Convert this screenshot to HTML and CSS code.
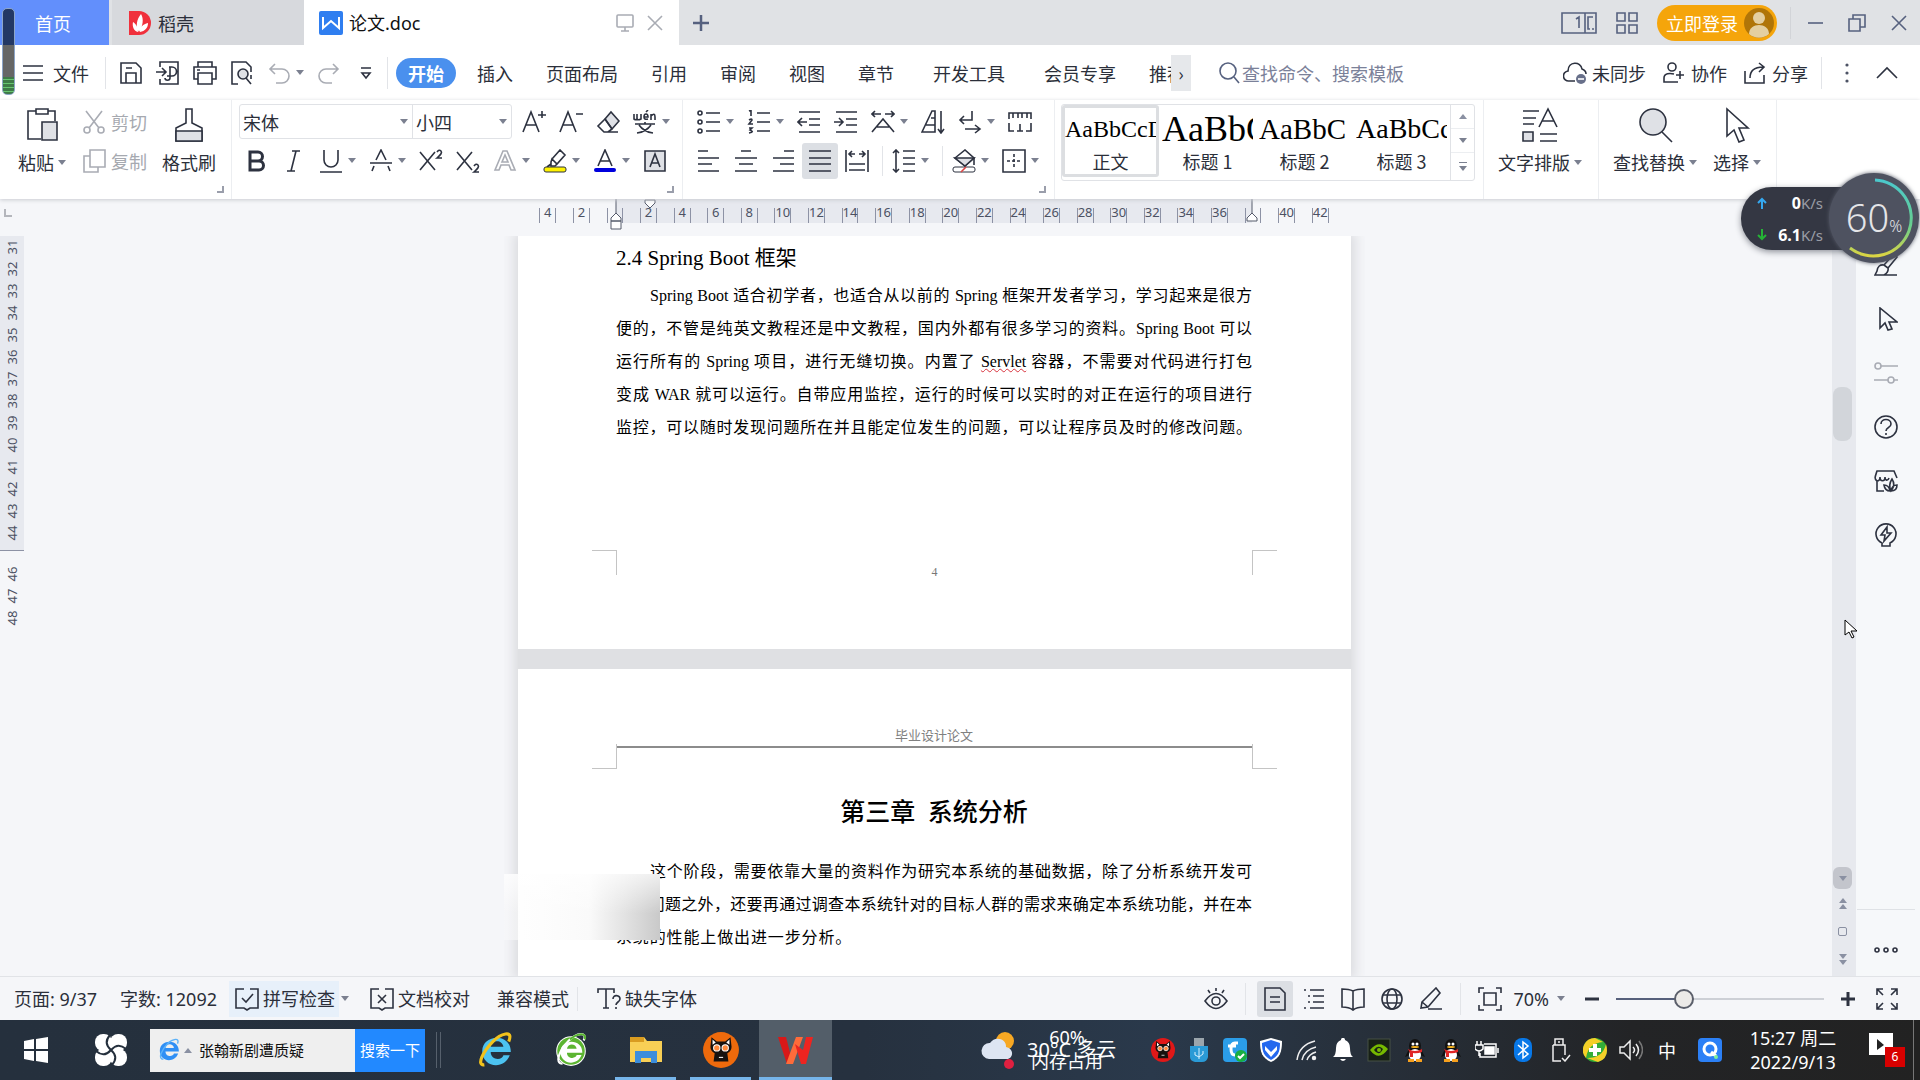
FILE: index.html
```html
<!DOCTYPE html>
<html lang="zh-CN">
<head>
    <meta charset="UTF-8">
    <meta name="viewport" content="width=device-width, initial-scale=1.0">
    <title>论文.doc</title>
    <link rel="stylesheet" href="styles.css">
</head>
<body>
    <!-- Window tabs -->
    <header class="titlebar">
        <button class="wtab home">首页</button>
        <button class="wtab docer">
            <svg width="24" height="24" viewBox="0 0 24 24"><path d="M0 0h10a12 12 0 0 1 0 24H0z" fill="#f0303c"/><path d="M10 21C6 15 8 8 12 3c3 5 2 12-2 18zM9 21c-4-1-6-5-5-10 3 2 5 5 5 10zM11 21c0-5 3-8 8-9 0 5-3 8-8 9z" fill="#fff"/></svg>
            稻壳
        </button>
        <div class="wtab current">
            <svg width="24" height="24" viewBox="0 0 24 24"><rect width="24" height="24" rx="2" fill="#2f7ef0"/><path d="M4 6v11l8-7 8 7V6" fill="none" stroke="#fff" stroke-width="2"/></svg>
            <span class="doc-name">论文.doc</span>
            <button class="plain" aria-label="窗口"><svg class="ico pale" viewBox="0 0 24 24"><rect x="4" y="4" width="16" height="12" rx="1"/><path d="M12 16v4M8 20h8"/></svg></button>
            <button class="plain" aria-label="关闭"><svg class="ico pale" viewBox="0 0 24 24"><path d="M5 5l14 14M19 5L5 19"/></svg></button>
        </div>
        <button class="plain new-tab" aria-label="新建"><svg class="ico slate" viewBox="0 0 24 24"><path d="M12 4v16M4 12h16" stroke-width="2.5"/></svg></button>
        <div class="window-tools">
            <button class="plain" aria-label="布局"><svg class="ico slate wide" viewBox="0 0 36 24"><path d="M1 2h34v20H1zM24 2v20M32 6h-5v12h2M31 18h2M15 8l3-2v11"/></svg></button>
            <button class="plain" aria-label="应用"><svg class="ico slate" viewBox="0 0 24 24"><path d="M2 2h8v8H2zM14 2h8v8h-8zM2 14h8v8H2zM14 14h8v8h-8z"/></svg></button>
            <button class="login">立即登录
                <svg width="30" height="30" viewBox="0 0 30 30"><circle cx="15" cy="15" r="15" fill="#b07508"/><circle cx="15" cy="10" r="6" fill="#e4cfa0"/><path d="M5 26c0-12 20-12 20 0-6 5-14 5-20 0z" fill="#e4cfa0"/></svg>
            </button>
            <span class="vline"></span>
            <button class="win" aria-label="最小化"><svg class="ico slate" viewBox="0 0 24 24"><path d="M5 12h15"/></svg></button>
            <button class="win" aria-label="还原"><svg class="ico slate" viewBox="0 0 24 24"><path d="M4 8h11v12H4zM8 8V4h12v12h-5"/></svg></button>
            <button class="win" aria-label="关闭"><svg class="ico slate" viewBox="0 0 24 24"><path d="M5 5l14 14M19 5L5 19"/></svg></button>
        </div>
    </header>

    <!-- Menu row -->
    <nav class="menubar">
        <button class="file">
            <svg class="ico" viewBox="0 0 24 24"><path d="M2 5h20M2 12h20M2 19h20"/></svg>文件
        </button>
        <span class="vline"></span>
        <div class="quick">
            <button class="plain" aria-label="保存"><svg class="ico" viewBox="0 0 24 24"><path d="M2 2h15l5 5v15H2zM7 22V12h10v10M7 7h6"/></svg></button>
            <button class="plain" aria-label="输出"><svg class="ico" viewBox="0 0 24 24"><path d="M4 6V1h18v22H4v-5M0 11h9M6 7l4 4-4 4M13 6h3a4 4 0 0 1 0 9h-5M14 6v11c0 3-5 3-5 0"/></svg></button>
            <button class="plain" aria-label="打印"><svg class="ico" viewBox="0 0 24 24"><path d="M5 6V1h14v5M5 18H1V6h22v12h-4M5 12h14v11H5zM4 9h3"/></svg></button>
            <button class="plain" aria-label="预览"><svg class="ico" viewBox="0 0 24 24"><path d="M8 23H2V1h14l5 5v5M21 14v4"/><circle cx="13" cy="13" r="5" fill="#dfe1e6"/><path d="M16 17l5 6"/></svg></button>
            <button class="plain" aria-label="撤销"><svg class="ico pale" viewBox="0 0 24 24"><path d="M8 3L3 8l5 5M3 8h12a7 7 0 0 1 0 14H9"/></svg><i class="caret"></i></button>
            <button class="plain" aria-label="重做"><svg class="ico pale" viewBox="0 0 24 24"><path d="M16 3l5 5-5 5M21 8H9a7 7 0 0 0 0 14h6"/></svg></button>
            <button class="plain" aria-label="更多"><svg class="ico" viewBox="0 0 24 24"><path d="M7 7h10M8 12l4 5 4-5z"/></svg></button>
        </div>
        <span class="vline"></span>
        <div class="menu-tabs">
            <button class="menu-tab active">开始</button>
            <button class="menu-tab">插入</button>
            <button class="menu-tab">页面布局</button>
            <button class="menu-tab">引用</button>
            <button class="menu-tab">审阅</button>
            <button class="menu-tab">视图</button>
            <button class="menu-tab">章节</button>
            <button class="menu-tab far">开发工具</button>
            <button class="menu-tab far">会员专享</button>
            <button class="menu-tab cut">推荐</button>
        </div>
        <button class="menu-more" aria-label="更多选项卡">›</button>
        <label class="command-search">
            <svg class="ico slate" viewBox="0 0 24 24"><circle cx="11" cy="10" r="8"/><path d="M17 16l5 6"/></svg>
            <input type="text" placeholder="查找命令、搜索模板" aria-label="查找命令">
        </label>
        <div class="share-tools">
            <button class="with-label"><svg class="ico" viewBox="0 0 24 24"><path d="M12 20H6a5 5 0 0 1-1-10C5 0 18 0 19 8c3 1 4 3 4 5"/><circle cx="18" cy="18" r="5" fill="#68708a" stroke="none"/><path d="M15 18h6" stroke="#fff"/></svg>未同步</button>
            <button class="with-label"><svg class="ico" viewBox="0 0 24 24"><circle cx="10" cy="6" r="4"/><path d="M16 21H2v-4c0-5 6-5 10-4M18 10v8M14 14h8"/></svg>协作</button>
            <button class="with-label"><svg class="ico" viewBox="0 0 24 24"><path d="M2 10v12h19v-8M7 17c0-8 5-11 13-11M16 2l5 4-5 5"/></svg>分享</button>
            <span class="vline"></span>
            <button class="plain" aria-label="更多"><svg class="ico solid" viewBox="0 0 24 24"><circle cx="12" cy="4" r="1.6"/><circle cx="12" cy="12" r="1.6"/><circle cx="12" cy="20" r="1.6"/></svg></button>
            <button class="plain" aria-label="收起"><svg class="ico" viewBox="0 0 24 24"><path d="M2 17L12 7l10 10"/></svg></button>
        </div>
    </nav>

    <!-- Ribbon -->
    <section class="ribbon">
        <div class="group clipboard">
            <button class="big"><svg class="ico large" viewBox="0 0 36 36"><path d="M12 4H4v28h13M24 4h7v10M12 2h12v5H12z"/><path d="M18 15h15v18H18z" fill="#dfe1e6"/></svg><span>粘贴<i class="caret"></i></span></button>
            <div class="stack">
                <button class="with-label"><svg class="ico pale" viewBox="0 0 24 24"><path d="M4 1l13 17M20 1L7 18"/><circle cx="5" cy="20" r="3"/><circle cx="19" cy="20" r="3"/></svg>剪切</button>
                <button class="with-label"><svg class="ico pale" viewBox="0 0 24 24"><path d="M8 1h15v17H8zM8 7H2v16h14v-5"/></svg>复制</button>
            </div>
            <button class="big"><svg class="ico large" viewBox="0 0 36 36"><path d="M15 2h6v14l10 5v13H5V21l10-5z"/><path d="M5 24h26v10H5z" fill="#dfe1e6"/></svg><span>格式刷</span></button>
            <i class="corner"></i>
        </div>

        <div class="group fonts">
            <div class="tools">
                <div class="font-box">
                    <label class="pick family"><select aria-label="字体"><option>宋体</option></select><i class="caret"></i></label>
                    <label class="pick size"><select aria-label="字号"><option>小四</option></select><i class="caret"></i></label>
                </div>
                <button class="plain" aria-label="增大字号"><svg class="ico" viewBox="0 0 24 24"><path d="M1 22L9 2l8 20M4 15h10M20 1v7M16 5h8"/></svg></button>
                <button class="plain" aria-label="减小字号"><svg class="ico" viewBox="0 0 24 24"><path d="M1 22L9 2l8 20M4 15h10M17 4h7"/></svg></button>
                <button class="plain" aria-label="清除格式"><svg class="ico" viewBox="0 0 24 24"><path d="M9 9l6-7 8 9-7 8z" fill="#dfe1e6"/><path d="M9 9l-7 7 6 6h4l4-3M9 9l7 10M8 22h14"/></svg></button>
                <button class="plain" aria-label="拼音指南"><svg class="ico" viewBox="0 0 24 24"><path d="M1 4v5q3 2 3-1V4M4 8q0 3 4 1V4M11 7h4q0-3-2-3t-2 3 4 2M13 2l2-2M18 10V4M18 6q4-4 4 1v3M2 14h20M12 12v2M6 15q5 7 14 8M18 15Q13 22 4 23" /></svg><i class="caret"></i></button>
            </div>
            <div class="tools row-two">
                <button class="plain" aria-label="加粗"><svg class="ico" viewBox="0 0 24 24"><path d="M5 3h8a4 4 0 0 1 0 9H5zM5 12h9a4 4 0 0 1 0 9H5z" stroke-width="3"/></svg></button>
                <button class="plain" aria-label="倾斜"><svg class="ico" viewBox="0 0 24 24"><path d="M10 2h8M5 22h8M14 2L9 22"/></svg></button>
                <button class="plain" aria-label="下划线"><svg class="ico" viewBox="0 0 24 24"><path d="M5 1v10a7 7 0 0 0 14 0V1M1 23h22"/></svg><i class="caret"></i></button>
                <button class="plain" aria-label="删除线"><svg class="ico" viewBox="0 0 24 24"><path d="M7 11l5-10 5 10M1 14h22M5 17l-2 5M19 17l2 5"/></svg><i class="caret"></i></button>
                <button class="plain" aria-label="上标"><svg class="ico" viewBox="0 0 24 24"><path d="M1 3l15 18M16 3L1 21M18 3q2-3 4-1t-4 7h5"/></svg></button>
                <button class="plain" aria-label="下标"><svg class="ico" viewBox="0 0 24 24"><path d="M1 3l15 18M16 3L1 21M18 17q2-3 4-1t-4 7h5"/></svg></button>
                <button class="plain" aria-label="文字效果"><svg class="ico pale" viewBox="0 0 24 24"><path d="M2 21L10 2h4l8 19h-4l-2-5H8l-2 5zM9 13h6l-3-7z"/></svg><i class="caret"></i></button>
                <button class="plain" aria-label="突出显示"><svg class="ico" viewBox="0 0 24 24"><path d="M9 10l8-9 5 5-8 9zM9 10l5 5-2 2H8v-4zM8 15l-4 3"/><rect x="1" y="18" width="22" height="5" rx="2" fill="#fff200" stroke-width="1"/></svg><i class="caret"></i></button>
                <button class="plain" aria-label="字体颜色"><svg class="ico" viewBox="0 0 24 24"><path d="M5 17L12 1l7 16M7 12h10"/><rect x="1" y="19" width="22" height="4" rx="2" fill="#00d" stroke="none"/></svg><i class="caret"></i></button>
                <button class="plain" aria-label="字符底纹"><svg class="ico" viewBox="0 0 24 24"><path d="M2 2h20v20H2z" fill="#dfe1e6"/><path d="M7 18l5-13 5 13M8 14h8"/></svg></button>
            </div>
            <i class="corner"></i>
        </div>

        <div class="group paragraph">
            <div class="tools">
                <button class="plain" aria-label="项目符号"><svg class="ico" viewBox="0 0 24 24"><circle cx="3" cy="3" r="2"/><circle cx="3" cy="12" r="2"/><circle cx="3" cy="21" r="2"/><path d="M9 3h14M9 12h14M9 21h14"/></svg><i class="caret"></i></button>
                <button class="plain" aria-label="编号"><svg class="ico" viewBox="0 0 24 24"><path d="M10 3h13M10 12h13M10 21h13M2 1l2-1v6M2 10q3-2 3 0l-3 4h4M2 18h3l-2 2q5 2-1 3"/></svg><i class="caret"></i></button>
                <button class="plain" aria-label="减少缩进"><svg class="ico" viewBox="0 0 24 24"><path d="M2 2h21M12 9h11M12 15h11M2 22h21M1 12h9M5 8l-4 4 4 4"/></svg></button>
                <button class="plain" aria-label="增加缩进"><svg class="ico" viewBox="0 0 24 24"><path d="M2 2h21M12 9h11M12 15h11M2 22h21M0 12h9M5 8l4 4-4 4"/></svg></button>
                <button class="plain" aria-label="中文版式"><svg class="ico" viewBox="0 0 24 24"><path d="M1 22L12 9l11 13M6 17h12M1 4h9M4 1L1 4l3 3M14 4h9M20 1l3 3-3 3"/></svg><i class="caret"></i></button>
                <button class="plain" aria-label="排序"><svg class="ico" viewBox="0 0 24 24"><path d="M1 22L11 1h3v21zM10 8h4M5 15h9M20 1v22M17 19l3 4 3-4"/></svg></button>
                <button class="plain" aria-label="换行"><svg class="ico" viewBox="0 0 24 24"><path d="M14 1v9H2M6 6l-4 4 4 4M7 19h14M17 15l5 4-5 4"/></svg><i class="caret"></i></button>
                <button class="plain" aria-label="标尺"><svg class="ico" viewBox="0 0 24 24"><path d="M1 9V3h22v6M5 3v5M10 3v5M14 3v5M19 3v5M1 13v8h5M23 13v8h-5M12 14v7M9 21h6"/></svg></button>
            </div>
            <div class="tools">
                <button class="plain" aria-label="左对齐"><svg class="ico" viewBox="0 0 24 24"><path d="M1 2h10M1 9h21M1 15h14M1 22h21"/></svg></button>
                <button class="plain" aria-label="居中"><svg class="ico" viewBox="0 0 24 24"><path d="M7 2h10M1 9h22M5 15h14M1 22h22"/></svg></button>
                <button class="plain" aria-label="右对齐"><svg class="ico" viewBox="0 0 24 24"><path d="M13 2h10M2 9h21M9 15h14M2 22h21"/></svg></button>
                <button class="plain on" aria-label="两端对齐"><svg class="ico" viewBox="0 0 24 24"><path d="M1 2h22M1 9h22M1 15h22M1 22h22"/></svg></button>
                <button class="plain" aria-label="分散对齐"><svg class="ico" viewBox="0 0 24 24"><path d="M1 1v22M23 1v22M4 15h16M4 21h16M4 5h6M14 5h6M7 2L4 5l3 3M17 2l3 3-3 3"/></svg></button>
                <span class="divider"></span>
                <button class="plain" aria-label="行距"><svg class="ico" viewBox="0 0 24 24"><path d="M4 1v22M1 4l3-3 3 3M1 20l3 3 3-3M11 2h12M11 9h12M11 15h12M11 22h12"/></svg><i class="caret"></i></button>
                <span class="divider"></span>
                <button class="plain" aria-label="底纹"><svg class="ico" viewBox="0 0 24 24"><path d="M3 9l10-8 9 8-9 8z"/><path d="M3 9h19l-9 8z" fill="#dfe1e6"/><path d="M22 9v7"/><rect x="1" y="18" width="22" height="5" rx="2" stroke-width="1"/><path d="M9 23l5-5" stroke="#d44"/></svg><i class="caret"></i></button>
                <button class="plain" aria-label="边框"><svg class="ico" viewBox="0 0 24 24"><path d="M1 1h22v22H1z"/><path d="M12 5v14M5 12h14" stroke-dasharray="3 2"/></svg><i class="caret"></i></button>
            </div>
            <i class="corner"></i>
        </div>

        <div class="group styles">
            <div class="style-box">
                <button class="style selected"><span class="sample s-body">AaBbCcD</span>正文</button>
                <button class="style"><span class="sample s-h1">AaBbC</span>标题 1</button>
                <button class="style"><span class="sample s-h2">AaBbC</span>标题 2</button>
                <button class="style"><span class="sample s-h3">AaBbCc</span>标题 3</button>
                <div class="style-scroll">
                    <button aria-label="上一行"><i class="caret up"></i></button>
                    <button aria-label="下一行"><i class="caret"></i></button>
                    <button class="expand" aria-label="展开"><i class="caret"></i></button>
                </div>
            </div>
        </div>

        <div class="group layout">
            <button class="big"><svg class="ico large" viewBox="0 0 36 36"><path d="M1 4h16M1 11h13M1 17h11M17 20L26 2l9 18M20 14h12M18 27h17M18 34h17"/><path d="M1 25h10v9H1z" fill="#dfe1e6"/></svg><span>文字排版<i class="caret"></i></span></button>
        </div>
        <div class="group find">
            <button class="big"><svg class="ico large" viewBox="0 0 36 36"><circle cx="16" cy="15" r="13" fill="#dfe1e6"/><path d="M25 25l10 10"/></svg><span>查找替换<i class="caret"></i></span></button>
            <button class="big"><svg class="ico large" viewBox="0 0 36 36"><path d="M8 2v27l7-6 5 12 5-2-5-12h9z"/></svg><span>选择<i class="caret"></i></span></button>
        </div>
    </section>

    <!-- Document area -->
    <main class="workspace">
        <aside class="v-ruler">
            <div class="tab-stop"><i></i></div>
            <div class="v-band"><span>31</span><span>32</span><span>33</span><span>34</span><span>35</span><span>36</span><span>37</span><span>38</span><span>39</span><span>40</span><span>41</span><span>42</span><span>43</span><span>44</span></div>
            <div class="v-rest"><span>46</span><span>47</span><span>48</span></div>
        </aside>

        <div class="canvas">
            <div class="h-ruler">
                <div class="h-band"></div>
                <div class="h-cells">
                    <span>4</span><span>2</span><span></span><span>2</span><span>4</span><span>6</span><span>8</span><span>10</span><span>12</span><span>14</span><span>16</span><span>18</span><span>20</span><span>22</span><span>24</span><span>26</span><span>28</span><span>30</span><span>32</span><span>34</span><span>36</span><span></span><span>40</span><span>42</span>
                </div>
                <svg class="marker first" width="14" height="10" viewBox="0 0 14 10"><path d="M2 1h10v3L7 9 2 4z"/></svg>
                <svg class="marker left" width="14" height="32" viewBox="0 0 14 32"><path d="M7 0v14M2 22v-3l5-5 5 5v3zM2 22h10v8H2z"/></svg>
                <svg class="marker right" width="14" height="32" viewBox="0 0 14 32"><path d="M7 0v14M2 22v-3l5-5 5 5v3z"/></svg>
            </div>

            <div class="pages">
                <article class="page">
                    <h2>2.4 Spring Boot 框架</h2>
                    <p>
                        <span class="line indent">Spring Boot 适合初学者，也适合从以前的 Spring 框架开发者学习，学习起来是很方</span>
                        <span class="line">便的，不管是纯英文教程还是中文教程，国内外都有很多学习的资料。Spring Boot 可以</span>
                        <span class="line">运行所有的 Spring 项目，进行无缝切换。内置了 <u>Servlet</u> 容器，不需要对代码进行打包</span>
                        <span class="line">变成 WAR 就可以运行。自带应用监控，运行的时候可以实时的对正在运行的项目进行</span>
                        <span class="line">监控，可以随时发现问题所在并且能定位发生的问题，可以让程序员及时的修改问题。</span>
                    </p>
                    <footer class="page-foot"><i class="mark bl"></i><span>4</span><i class="mark br"></i></footer>
                </article>
                <article class="page second">
                    <div class="page-head">毕业设计论文</div>
                    <div class="marks"><i class="mark tl"></i><i class="mark tr"></i></div>
                    <h1>第三章&ensp;系统分析</h1>
                    <p>
                        <span class="line indent">这个阶段，需要依靠大量的资料作为研究本系统的基础数据，除了分析系统开发可</span>
                        <span class="line">行性问题之外，还要再通过调查本系统针对的目标人群的需求来确定本系统功能，并在本</span>
                        <span class="line short">系统的性能上做出进一步分析。</span>
                    </p>
                    <div class="smear"></div>
                </article>
            </div>
        </div>

        <div class="scrollbar">
            <div class="track"><div class="thumb"></div></div>
            <button class="down" aria-label="向下"><i class="caret"></i></button>
            <button aria-label="上一页"><i class="caret up"></i><i class="caret up"></i></button>
            <button aria-label="选择浏览对象"><i class="square"></i></button>
            <button aria-label="下一页"><i class="caret"></i><i class="caret"></i></button>
        </div>

        <aside class="sidebar">
            <button class="plain" aria-label="样式"><svg class="ico" viewBox="0 0 24 24"><path d="M10 12L19 2q3-1 4 2l-9 11M10 12q-6-1-7 6l-2 4h9q5-3 4-7zM10 22h13"/></svg></button>
            <button class="plain" aria-label="选择"><svg class="ico" viewBox="0 0 24 24"><path d="M6 1v20l5-5 3 7 4-1-3-7h8z"/></svg></button>
            <button class="plain" aria-label="属性"><svg class="ico pale" viewBox="0 0 24 24"><circle cx="4" cy="5" r="3"/><path d="M7 5h17M0 19h14M20 19h4"/><circle cx="17" cy="19" r="3"/></svg></button>
            <button class="plain" aria-label="帮助"><svg class="ico" viewBox="0 0 24 24"><circle cx="12" cy="12" r="11"/><path d="M7 9c0-6 10-6 10 0 0 4-5 3-5 7M12 18v2"/></svg></button>
            <button class="plain" aria-label="素材"><svg class="ico" viewBox="0 0 24 24"><path d="M3 12v10h7M3 12C0 10 1 8 3 2h17l3 7M3 12c3 0 3-2 3-4 0 5 5 5 5 0 0 4 3 4 4 1M17 22q-3-6 1-12 4 6-1 12zM16 22q-5 0-6-6 5 0 6 6zM17 22q1-6 6-6 0 6-6 6z"/></svg></button>
            <button class="plain" aria-label="灵感"><svg class="ico" viewBox="0 0 24 24"><path d="M8 20a10 10 0 1 1 8 0v3H8zM13 4l-6 8h4l-1 6 7-8h-4z"/></svg></button>
            <button class="plain side-more" aria-label="更多"><svg class="ico" viewBox="0 0 24 24"><circle cx="3" cy="12" r="2"/><circle cx="12" cy="12" r="2"/><circle cx="21" cy="12" r="2"/></svg></button>
        </aside>
    </main>

    <!-- Status bar -->
    <footer class="statusbar">
        <span class="stat">页面: 9/37</span>
        <span class="stat">字数: 12092</span>
        <button class="with-label spell"><svg class="ico" viewBox="0 0 24 24"><path d="M9 2H1v19h8l3 2 3-2h8V2h-8M7 11l4 4 7-8"/></svg>拼写检查</button>
        <i class="caret"></i>
        <button class="with-label proof"><svg class="ico" viewBox="0 0 24 24"><path d="M9 2H1v19h8l3 2 3-2h8V2h-8M8 8l8 8M16 8l-8 8"/></svg>文档校对</button>
        <span class="compat">兼容模式</span>
        <button class="with-label missing"><svg class="ico" viewBox="0 0 24 24"><path d="M1 6V2h16v4M9 2v19M6 21h6M16 12c0-5 7-4 7 0 0 3-4 3-4 6M19 20v2"/></svg>缺失字体</button>

        <div class="view-tools">
            <button class="plain" aria-label="护眼"><svg class="ico" viewBox="0 0 24 24"><path d="M1 14q11-15 22 0-11 15-22 0zM12 1v3M4 3l2 3M20 3l-2 3"/><circle cx="12" cy="14" r="4"/></svg></button>
            <span class="vline"></span>
            <button class="plain on" aria-label="页面视图"><svg class="ico" viewBox="0 0 24 24"><path d="M2 1h15l5 5v17H2zM7 10h10M7 15h10"/></svg></button>
            <button class="plain" aria-label="大纲"><svg class="ico" viewBox="0 0 24 24"><path d="M2 3h2M8 3h14M6 9h2M11 9h11M6 15h2M11 15h11M2 21h2M8 21h14"/></svg></button>
            <button class="plain" aria-label="阅读"><svg class="ico" viewBox="0 0 24 24"><path d="M12 4q-4-2-11-2v18q7 0 11 3 4-3 11-3V2q-7 0-11 2v19"/></svg></button>
            <button class="plain" aria-label="网页"><svg class="ico" viewBox="0 0 24 24"><circle cx="12" cy="12" r="10"/><ellipse cx="12" cy="12" rx="5" ry="10"/><path d="M3 8h18M3 16h18"/></svg></button>
            <button class="plain" aria-label="写作"><svg class="ico" viewBox="0 0 24 24"><path d="M3 15L17 1l4 5L9 20l-7 1zM3 15l6 5M9 22h14"/></svg></button>
            <span class="vline"></span>
            <button class="plain" aria-label="适应"><svg class="ico" viewBox="0 0 24 24"><path d="M6 6h12v12H6zM1 6V1h5M18 1h5v5M1 18v5h5M18 23h5v-5"/></svg></button>
            <button class="zoom-value">70%<i class="caret"></i></button>
            <button class="plain" aria-label="缩小"><svg class="ico" viewBox="0 0 24 24"><path d="M5 12h14" stroke-width="3"/></svg></button>
            <input class="zoom-range" type="range" min="0" max="100" value="31" aria-label="缩放">
            <button class="plain" aria-label="放大"><svg class="ico" viewBox="0 0 24 24"><path d="M5 12h14M12 5v14" stroke-width="3"/></svg></button>
            <button class="plain" aria-label="全屏"><svg class="ico" viewBox="0 0 24 24"><path d="M2 8V2h6M2 2l6 6M22 8V2h-6M22 2l-6 6M2 16v6h6M2 22l6-6M22 16v6h-6M22 22l-6-6"/></svg></button>
        </div>
    </footer>

    <!-- Desktop taskbar -->
    <div class="taskbar">
        <button class="start" aria-label="开始"><svg width="24" height="26" viewBox="0 0 24 26"><path d="M0 4l10-2v10H0zM12 2l12-2v12H12zM0 14h10v10L0 22zM12 14h12v12l-12-2z" fill="#fff"/></svg></button>
        <button class="fan" aria-label="小组件"><svg width="34" height="34" viewBox="0 0 34 34"><g fill="#fff"><rect x="1" y="1" width="17" height="17" rx="8"/><rect x="16" y="1" width="17" height="17" rx="8"/><rect x="16" y="16" width="17" height="17" rx="8"/><rect x="1" y="16" width="17" height="17" rx="8"/><path d="M10 10h14v14H10z"/></g><g fill="none" stroke="#25303d" stroke-width="2"><path id="blade" d="M16 2q-7 8 1 15"/><use href="#blade" transform="rotate(90 17 17)"/><use href="#blade" transform="rotate(180 17 17)"/><use href="#blade" transform="rotate(270 17 17)"/></g></svg></button>
        <form class="task-search">
            <svg width="24" height="30" viewBox="0 0 34 34"><use href="#letter-e" fill="#2f8ff5"/><path d="M29 8c4-9-7-7-14 0C6 17 1 30 9 30" fill="none" stroke="#5db2f8" stroke-width="2"/></svg>
            <i class="caret up"></i>
            <input type="text" value="张翰新剧遭质疑" aria-label="搜索">
            <button type="button">搜索一下</button>
        </form>
        <span class="grip"></span>
        <div class="apps">
            <button class="app" aria-label="浏览器"><svg width="36" height="36" viewBox="0 0 34 34"><defs><path id="letter-e" fill-rule="evenodd" d="M31 19H12c0 8 11 8 12 3h6C25 36 4 34 4 18 4 2 31 0 31 19zM12 14h12c-1-7-11-7-12 0z"/></defs><use href="#letter-e" fill="#4cc3f1"/><path d="M29 9c5-12-8-7-15 0C5 18-2 32 6 31" fill="none" stroke="#f2c21c" stroke-width="3"/></svg></button>
            <button class="app" aria-label="安全浏览器"><svg width="36" height="36" viewBox="0 0 34 34"><circle cx="17" cy="18" r="14" fill="#fff"/><circle cx="17" cy="18" r="13" fill="#5cb531"/><svg x="4" y="5" width="26" height="26" viewBox="0 0 34 34"><use href="#letter-e" fill="#fff"/></svg><path d="M29 8c4-9-7-7-14 0C6 17 1 30 9 30" fill="none" stroke="#fff" stroke-width="2"/><path d="M30 7c2-7-7-6-14 0" fill="none" stroke="#58b530" stroke-width="2"/></svg></button>
            <button class="app open" aria-label="文件资源管理器"><svg width="36" height="36" viewBox="0 0 36 36"><path d="M2 5h14l3 4h15v21H2z" fill="#f8cf55"/><path d="M2 5h14v5H2z" fill="#d99c20"/><path d="M7 31V19h22v12h-6v-5H13v5z" fill="#3c8ddc"/></svg></button>
            <button class="app open" aria-label="抢票"><svg width="38" height="38" viewBox="0 0 36 36"><circle cx="18" cy="18" r="17" fill="#ee6a0c"/><use href="#cat"/></svg></button>
            <button class="app open active" aria-label="WPS"><svg width="36" height="32" viewBox="0 0 36 32"><path d="M0 3h8l7 27H9z" fill="#d81818"/><path d="M8 30L18 3h7L15 30z" fill="#ff6b3a"/><path d="M17 10l6 20h5L35 3h-7l-3 13z" fill="#ee2420"/></svg></button>
        </div>

        <div class="weather">
            <svg width="36" height="40" viewBox="0 0 36 40"><circle cx="24" cy="11" r="9" fill="#f7a823"/><path d="M8 29a8 8 0 0 1 1-16c5-8 17-4 16 4 9 2 7 12 1 12z" fill="#dde5f2"/><circle cx="28" cy="34" r="5" fill="#e02040"/></svg>
            <div class="weather-text"><span class="temp">30°C 多云</span><span class="memory">60%<br>内存占用</span></div>
        </div>
        <div class="tray">
            <svg viewBox="0 0 24 24"><defs><g id="cat"><path d="M9 6l5 4h8l5-4 1 9q0 4-4 6l1 8H11l1-8q-4-2-4-6z" fill="#17120f"/><path d="M10 8l3 3-3 2zM26 8l-3 3 3 2z" fill="#fff"/><circle cx="14" cy="16" r="3" fill="#ff8a3c" stroke="#fff"/><circle cx="22" cy="16" r="3" fill="#ff8a3c" stroke="#fff"/><path d="M16 25h4" stroke="#fff"/></g><g id="penguin"><ellipse cx="12" cy="8" rx="6" ry="7" fill="#111"/><path d="M6 11l-4 8 5-2v5h10v-5l5 2-4-8z" fill="#111"/><ellipse cx="12" cy="17" rx="6" ry="6" fill="#fff"/><circle cx="10" cy="6" r="1.5" fill="#fff"/><circle cx="14" cy="6" r="1.5" fill="#fff"/><ellipse cx="12" cy="9" rx="4" ry="1" fill="#f7b21d"/><path d="M5 11q7 4 14 0v3q-5 2-9 1v4H7v-4z" fill="#e02626"/><path d="M5 21h6v3H5zM13 21h6v3h-6z" fill="#f7a01d"/></g></defs><circle cx="12" cy="12" r="12" fill="#e01818"/><svg width="24" height="24" viewBox="2 2 32 32"><use href="#cat"/></svg></svg>
            <svg viewBox="0 0 24 24"><path d="M7 0h10v8H7z" fill="#9ba5ac"/><path d="M3 8h18v11q-1 5-6 5H8q-5-1-5-5z" fill="#2a9ad6"/><path d="M12 10v11M8 14v3l4 2 4-3v-3" stroke="#d8f1ff" fill="none"/></svg>
            <svg viewBox="0 0 24 24"><rect width="24" height="24" rx="4" fill="#2b9de8"/><path d="M15 5h-3q-4 0-4 6t4 6M5 8h8" fill="none" stroke="#fff" stroke-width="3"/><circle cx="18" cy="18" r="6" fill="#18ae42"/><path d="M15 18l2 2 4-4" stroke="#fff" stroke-width="2" fill="none"/></svg>
            <svg viewBox="0 0 24 24"><path d="M12 0l11 3c0 11-2 17-11 21C3 20 1 14 1 3z" fill="#fff"/><path d="M12 2l9 3c0 9-2 13-9 17C5 18 3 14 3 5z" fill="#2468ee"/><path d="M6 8l6 6 6-6v4l-6 7-6-7z" fill="#fff"/></svg>
            <svg viewBox="0 0 24 24" fill="none" stroke="#eee" stroke-width="1.5"><path d="M2 22Q4 7 20 3M7 22Q9 12 21 9M12 22q2-6 9-8"/><circle cx="19" cy="20" r="1.5" fill="#fff"/></svg>
            <svg viewBox="0 0 24 24" fill="#fff"><path d="M2 19q3-2 3-9 0-6 5-8c0-3 4-3 4 0q5 2 5 8 0 7 3 9zM9 21h6q-3 4-6 0z"/></svg>
            <svg viewBox="0 0 24 24"><rect x="1" y="1" width="22" height="22" fill="#172016" stroke="#465044"/><path d="M3 12q9-11 18-1-9 13-18 1zM7 12q5 7 9-1-5-5-9 1" fill="#76b900" fill-rule="evenodd"/><circle cx="12" cy="12" r="2" fill="#76b900"/></svg>
            <svg viewBox="0 0 24 24"><use href="#penguin"/></svg>
            <svg viewBox="0 0 24 24"><use href="#penguin"/></svg>
            <svg viewBox="0 0 24 24" fill="none" stroke="#fff" stroke-width="1.5"><path d="M9 6h12v13H5v-4M23 10v5M2 3v4M6 3v4M0 7h8v4q-4 4-8 0zM4 13v5"/><path d="M10 9h9v7h-9z" fill="#fff"/></svg>
            <svg viewBox="0 0 24 24"><rect x="3" width="18" height="24" rx="8" fill="#0878e8"/><path d="M7 7l10 9-5 4V4l5 4-10 9" fill="none" stroke="#fff" stroke-width="1.5"/></svg>
            <svg viewBox="0 0 24 24" fill="none" stroke="#eee" stroke-width="1.5"><path d="M8 7V1h8v6M6 7h12v10M6 7v16h8M11 4h2M15 20l3 3 5-6"/></svg>
            <svg viewBox="0 0 24 24"><circle cx="12" cy="12" r="12" fill="#33ad38"/><path d="M3 20A12 12 0 0 1 12 0l8 4Q5 5 3 20zM4 20q16 0 19-14 4 14-8 18z" fill="#f5cf28"/><path d="M12 6v12M6 12h12" stroke="#fff" stroke-width="4"/></svg>
            <svg viewBox="0 0 24 24" fill="none" stroke="#eee" stroke-width="1.5"><path d="M1 9h4l6-6v18l-6-6H1zM14 9q3 3 0 6M17 6q5 6 0 12"/><path d="M20 3q7 9 0 18" stroke="#777"/></svg>
            <span class="ime">中</span>
        </div>
        <svg width="24" height="24" viewBox="0 0 24 24"><rect width="24" height="24" rx="4" fill="#2c80f6"/><circle cx="12" cy="11" r="6" fill="none" stroke="#fff" stroke-width="3"/><path d="M13 14l5 4" stroke="#fff" stroke-width="3"/><circle cx="18" cy="19" r="2" fill="#7df09a"/></svg>
        <div class="clock">15:27 周二<br>2022/9/13</div>
        <div class="notice"><svg width="24" height="24" viewBox="0 0 24 24"><path d="M0 0h24v22H0z" fill="#fff"/><path d="M8 6l7 6-7 5z" fill="#222"/></svg><b>6</b></div>
        <span class="desktop-edge"></span>
    </div>

    <!-- Floating overlays -->
    <div class="battery"></div>
    <div class="netmeter">
        <div class="speeds">
            <div><svg width="10" height="12" viewBox="0 0 10 12"><path d="M5 12V2M1 6l4-4 4 4" stroke="#35a8f0" stroke-width="2" fill="none"/></svg><span><b>0</b>K/s</span></div>
            <div><svg width="10" height="12" viewBox="0 0 10 12"><path d="M5 0v10M1 6l4 4 4-4" stroke="#25b336" stroke-width="2" fill="none"/></svg><span><b>6.1</b>K/s</span></div>
        </div>
        <div class="dial">
            <svg width="90" height="90" viewBox="0 0 90 90"><defs><linearGradient id="arc" x1="0" y1="0" x2="0" y2="1"><stop offset="0" stop-color="#4bc8cc"/><stop offset="0.6" stop-color="#68cf8e"/><stop offset="1" stop-color="#dbd443"/></linearGradient></defs><path d="M46 7a38 38 0 1 1-25 68" fill="none" stroke="url(#arc)" stroke-width="3"/></svg>
            <span class="percent">60<small>%</small></span>
        </div>
    </div>
    <svg class="pointer" width="14" height="20" viewBox="0 0 14 20"><path d="M1 1v15l4-3 3 6 2-1-3-6h6z" fill="#fff" stroke="#000"/></svg>
</body>
</html>
```

FILE: styles.css
```css
* {
    box-sizing: border-box;
}
body {
    margin: 0;
    height: 100vh;
    position: relative;
    display: flex;
    flex-direction: column;
    overflow: hidden;
    font-family: "Noto Sans CJK SC", sans-serif;
    font-size: 18px;
    line-height: 24px;
    color: #2b2f3a;
    background-color: #f5f6f9;
}
button, input, select {
    font: inherit;
    color: inherit;
    border: 0;
    padding: 0;
    margin: 0;
    background: none;
}
button {
    white-space: nowrap;
}
svg {
    display: block;
    flex: none;
}
.ico {
    width: 24px;
    height: 24px;
    fill: none;
    stroke: #2d3240;
    stroke-width: 1.6;
}
.ico.pale {
    stroke: #a9acb4;
}
.ico.slate {
    stroke: #56617f;
}
.ico.solid {
    fill: #4d5365;
    stroke: none;
}
.ico.wide {
    width: 36px;
}
.ico.large {
    width: 36px;
    height: 36px;
}
.plain {
    display: flex;
    align-items: center;
    gap: 5px;
}
.with-label {
    display: flex;
    align-items: center;
    gap: 5px;
}
.caret {
    display: inline-block;
    flex: none;
    border: 4px solid transparent;
    border-top: 5px solid #7b8090;
    border-bottom: 0;
}
.caret.up {
    border-top: 0;
    border-bottom: 5px solid #8a90a2;
}
.vline {
    width: 1px;
    height: 32px;
    background-color: #e2e4e8;
}

/* title bar */
.titlebar {
    display: flex;
    height: 45px;
    flex: none;
    background-color: #e0e2e5;
}
.wtab {
    display: flex;
    align-items: center;
    gap: 5px;
}
.wtab.home {
    width: 109px;
    padding-left: 35px;
    color: #fff;
    background-color: #628ffc;
}
.wtab.docer {
    width: 192px;
    margin-left: 3px;
    padding-left: 17px;
    background-color: #d7d9dd;
}
.wtab.current {
    width: 375px;
    padding: 0 12px 0 15px;
    gap: 6px;
    color: #111;
    background-color: #fff;
}
.doc-name {
    flex: 1;
    font-family: "Noto Sans", "Noto Sans CJK SC", sans-serif;
}
.new-tab {
    margin-left: 10px;
}
.window-tools {
    display: flex;
    align-items: center;
    margin-left: auto;
}
.window-tools .plain {
    margin-right: 18px;
}
.login {
    display: flex;
    align-items: center;
    justify-content: space-between;
    width: 120px;
    height: 36px;
    margin-right: 13px;
    padding: 0 3px 0 9px;
    border-radius: 18px;
    color: #fff;
    background-color: #f5a50b;
}
.window-tools .vline {
    margin-right: 3px;
    background-color: #d2d4d8;
}
.win {
    display: flex;
    justify-content: center;
    width: 42px;
}

/* menu row */
.menubar {
    display: flex;
    align-items: center;
    height: 55px;
    flex: none;
    background-color: #fff;
}
.file {
    display: flex;
    align-items: center;
    gap: 8px;
    padding: 0 16px 0 21px;
}
.quick {
    display: flex;
    gap: 13px;
    padding: 0 9px 0 13px;
}
.menu-tabs {
    display: flex;
    align-items: center;
    gap: 33px;
    padding-left: 8px;
}
.menu-tab.active {
    width: 60px;
    height: 30px;
    margin-right: -12px;
    border-radius: 15px;
    font-weight: bold;
    color: #fff;
    background-color: #4a90ee;
}
.menu-tab.far {
    margin-left: 6px;
}
.menu-tab.cut {
    width: 22px;
    overflow: hidden;
}
.menu-more {
    width: 20px;
    height: 36px;
    background-color: #e6e8eb;
}
.command-search {
    display: flex;
    align-items: center;
    gap: 1px;
    margin-left: 26px;
}
.command-search input {
    width: 220px;
    height: 30px;
}
.command-search input::placeholder {
    color: #7b8199;
    opacity: 1;
}
.share-tools {
    display: flex;
    align-items: center;
    gap: 16px;
    margin-left: auto;
    padding-right: 21px;
}
.share-tools .vline {
    margin: 0 -3px;
}

/* ribbon */
.ribbon {
    display: flex;
    height: 99px;
    flex: none;
    background-color: #fff;
    box-shadow: 0 1px 4px #c9cbd1;
    position: relative;
    z-index: 1;
}
.group {
    position: relative;
    padding-top: 4px;
    border-right: 1px solid #eceef1;
}
.corner {
    position: absolute;
    right: 8px;
    bottom: 6px;
    width: 7px;
    height: 7px;
    border-right: 2px solid #9a9eab;
    border-bottom: 2px solid #9a9eab;
}
.clipboard {
    display: flex;
    align-items: flex-start;
    width: 232px;
    padding-left: 18px;
}
.clipboard .corner {
    right: 7px;
}
.big {
    display: flex;
    flex-direction: column;
    align-items: center;
    gap: 7px;
    padding-top: 3px;
}
.big span {
    display: flex;
    align-items: center;
    gap: 4px;
}
.stack {
    display: grid;
    gap: 4px;
    margin: 0 15px 0 16px;
}
.stack .with-label {
    height: 35px;
    color: #a6a9b0;
}
.tools {
    display: flex;
    align-items: center;
    gap: 13px;
    height: 35px;
    margin-bottom: 4px;
}
.fonts {
    width: 451px;
    padding-left: 7px;
}
.row-two {
    padding-left: 6px;
}
.font-box {
    display: flex;
    width: 273px;
    height: 35px;
    margin-right: -3px;
    border: 1px solid #e0e2e6;
    border-radius: 3px;
}
.pick {
    display: flex;
    align-items: center;
    padding-right: 4px;
}
.pick select {
    flex: 1;
    min-width: 0;
    padding-left: 3px;
    appearance: none;
}
.pick.family {
    width: 173px;
    border-right: 1px solid #e0e2e6;
}
.pick.size {
    flex: 1;
}
.paragraph {
    width: 372px;
    padding-left: 14px;
}
.on {
    padding: 6px;
    margin: 0 -6px;
    border-radius: 3px;
    background-color: #dcdfe4;
}
.divider {
    width: 1px;
    height: 30px;
    margin-right: -4px;
    background-color: #e2e4e8;
}
.styles {
    padding: 4px 8px 0 6px;
}
.style-box {
    display: flex;
    height: 77px;
    border: 1px solid #e0e2e6;
    border-radius: 3px;
}
.style {
    display: flex;
    flex-direction: column;
    align-items: center;
    width: 97px;
    height: 72px;
    padding: 3px;
}
.style.selected {
    padding: 0;
    border: 3px solid #dcdee1;
    border-radius: 3px;
}
.sample {
    width: 91px;
    height: 41px;
    overflow: hidden;
    text-align: left;
    line-height: 42px;
    font-family: "Liberation Serif", serif;
    color: #000;
}
.s-body {
    font-size: 24px;
}
.s-h1 {
    font-size: 36px;
}
.s-h2 {
    font-size: 29px;
}
.s-h3 {
    font-size: 28px;
}
.style-scroll {
    display: grid;
    width: 24px;
    border-left: 1px solid #e0e2e6;
}
.style-scroll button {
    display: grid;
    place-items: center;
    align-content: center;
    gap: 3px;
    border-bottom: 1px solid #eceef1;
}
.style-scroll .expand {
    border-bottom: 0;
}
.expand::before {
    content: "";
    width: 8px;
    height: 1px;
    background-color: #7b8090;
}
.layout {
    width: 115px;
    padding-left: 14px;
}
.find {
    display: flex;
    align-items: flex-start;
    gap: 16px;
    width: 178px;
    padding-left: 14px;
}

/* workspace */
.workspace {
    display: flex;
    flex: 1;
    min-height: 0;
    border-bottom: 1px solid #e1e3e7;
}
.v-ruler {
    width: 24px;
    font: 13px/22px "Noto Sans", sans-serif;
    color: #4c5163;
}
.tab-stop {
    height: 37px;
    padding: 10px 0 0 4px;
}
.tab-stop i {
    display: block;
    width: 8px;
    height: 8px;
    border-left: 2px solid #b4b6bc;
    border-bottom: 2px solid #b4b6bc;
}
.v-band {
    display: flex;
    flex-direction: column;
    height: 315px;
    padding-bottom: 9px;
    border-bottom: 1px solid #8d92a5;
    background-color: #e7e9ef;
}
.v-band span {
    flex: 1;
}
.v-rest {
    padding-top: 12px;
}
.v-ruler span {
    display: grid;
    place-items: center;
    height: 22px;
    width: 24px;
    transform: rotate(-90deg);
}
.canvas {
    display: flex;
    flex-direction: column;
    align-items: center;
    flex: 1;
    min-width: 0;
    padding-left: 13px;
    overflow: hidden;
}
.h-ruler {
    position: relative;
    width: 833px;
    height: 37px;
    flex: none;
    padding: 0 14px 0 13px;
}
.h-band {
    position: absolute;
    left: 98px;
    right: 99px;
    top: 0;
    height: 24px;
    background-color: #e7e9ef;
}
.h-cells {
    position: relative;
    display: grid;
    grid-template-columns: repeat(24, 1fr);
    padding-top: 9px;
}
.h-cells span {
    justify-self: center;
    width: 50%;
    height: 15px;
    border-left: 1px solid #8d92a5;
    border-right: 1px solid #8d92a5;
    font: 13px/8px "Noto Sans", sans-serif;
    display: flex;
    justify-content: center;
    color: #4c5163;
}
.marker {
    position: absolute;
    top: 0;
    fill: #fff;
    stroke: #555a6b;
}
.marker.first {
    left: 125px;
}
.marker.left {
    left: 91px;
}
.marker.right {
    right: 92px;
}
.pages {
    width: 833px;
    flex: 1;
    min-height: 0;
    display: flex;
    flex-direction: column;
    gap: 20px;
    background-color: #dfe0e3;
    box-shadow: 0 0 12px 4px #d9dade;
    clip-path: inset(0 -14px);
}
.page {
    position: relative;
    flex: none;
    padding: 8px 99px 55px 98px;
    font-family: "Liberation Serif", "Noto Sans CJK SC", serif;
    color: #000;
    background-color: #fff;
}
.page h2 {
    margin: 0 0 7px;
    font-size: 21px;
    font-weight: normal;
    line-height: 28px;
}
.page p {
    margin: 0;
    font-size: 16px;
    line-height: 33px;
}
.line {
    display: block;
    height: 33px;
    white-space: nowrap;
    text-align: justify;
    text-align-last: justify;
}
.line.indent {
    padding-left: 34px;
}
.line.short {
    width: 37%;
}
.line u {
    text-decoration: underline wavy #d8323c 1px;
}
.page-foot {
    display: flex;
    justify-content: space-between;
    align-items: center;
    height: 44px;
    margin: 106px -25px 0 -24px;
    font-size: 12px;
    color: #777;
}
.mark {
    width: 25px;
    height: 25px;
    align-self: flex-start;
    border: 0 solid #c4c4c4;
}
.mark.bl {
    border-width: 1px 1px 0 0;
}
.mark.br {
    border-width: 1px 0 0 1px;
}
.mark.tl {
    border-width: 0 1px 1px 0;
}
.mark.tr {
    border-width: 0 0 1px 1px;
}
.page.second {
    flex: 1;
    padding-top: 57px;
    padding-bottom: 0;
}
.page-head {
    height: 22px;
    border-bottom: 2px solid #8c8c8c;
    text-align: center;
    font-size: 13px;
    line-height: 20px;
    color: #808080;
}
.marks {
    display: flex;
    justify-content: space-between;
    margin: -4px -25px 0 -24px;
}
.page h1 {
    margin: 26px 0 24px;
    text-align: center;
    font-size: 25px;
    font-weight: 500;
    line-height: 36px;
}
.smear {
    position: absolute;
    left: -16px;
    top: 205px;
    width: 158px;
    height: 66px;
    background: linear-gradient(to bottom, rgba(255,255,255,0.7), rgba(255,255,255,0) 60%), linear-gradient(to right, rgba(255,255,255,0.2), #fdfdfd 25%, #fafafa 55%, #e2e2e2 78%, #c9c9c9);
}

/* scrollbar and side panel */
.scrollbar {
    display: flex;
    flex-direction: column;
    width: 24px;
    margin-top: 37px;
    padding: 0 4px 0 1px;
    background-color: #e7e9ee;
}
.track {
    flex: 1;
    padding-top: 151px;
}
.thumb {
    height: 54px;
    border-radius: 8px;
    background-color: #d2d5da;
}
.scrollbar button {
    display: flex;
    flex-direction: column;
    align-items: center;
    justify-content: center;
    gap: 1px;
    height: 28px;
}
.scrollbar .caret {
    border-top-color: #8a90a2;
}
.scrollbar .down {
    height: 22px;
    border-radius: 6px;
    background-color: #c3c5cc;
}
.scrollbar button:last-child {
    margin-bottom: 3px;
}
.square {
    width: 9px;
    height: 9px;
    border: 1px solid #8a90a2;
    border-radius: 2px;
}
.sidebar {
    display: flex;
    flex-direction: column;
    align-items: center;
    gap: 30px;
    width: 64px;
    padding: 54px 4px 0 0;
    background-color: #f6f8fa;
}
.side-more {
    align-items: flex-start;
    width: 58px;
    height: 67px;
    margin-top: auto;
    padding: 28px 0 0 17px;
    border-top: 1px solid #dfe2e6;
}

/* status bar */
.statusbar {
    display: flex;
    align-items: center;
    height: 43px;
    flex: none;
    padding: 0 21px 0 14px;
    font-family: "Noto Sans", "Noto Sans CJK SC", sans-serif;
}
.statusbar .with-label {
    gap: 4px;
}
.stat {
    width: 106px;
}
.spell {
    height: 36px;
    margin-left: 3px;
    padding: 0 4px 0 6px;
    background-color: #e7f0fa;
}
.statusbar > .caret {
    margin-left: 2px;
}
.proof {
    margin-left: 21px;
}
.compat {
    margin: 0 12px 0 27px;
    padding-right: 8px;
    border-right: 1px solid #e2e4e8;
}
.missing {
    margin-left: 7px;
}
.view-tools {
    display: flex;
    align-items: center;
    gap: 15px;
    margin-left: auto;
}
.view-tools .vline {
    margin: 0 2px;
}
.zoom-value {
    display: flex;
    align-items: center;
    gap: 8px;
    margin-left: -4px;
}
.zoom-range {
    width: 208px;
    height: 20px;
    margin: 0 -3px;
    appearance: none;
    background: linear-gradient(to right, #56607c 33%, #cdd0d6 33%) center / 100% 2px no-repeat;
}
.zoom-range::-webkit-slider-thumb {
    appearance: none;
    width: 20px;
    height: 20px;
    border: 2px solid #5b5f6b;
    border-radius: 50%;
    background-color: #eceae8;
}

/* taskbar */
.taskbar {
    display: flex;
    align-items: center;
    height: 60px;
    flex: none;
    color: #fff;
    background: linear-gradient(to right, #25303d, #26313f 45%, #2a394b 60%, #232426 85%, #222);
}
.start {
    margin-left: 24px;
}
.fan {
    margin-left: 46px;
}
.task-search {
    display: flex;
    align-items: center;
    width: 275px;
    height: 43px;
    margin: 0 0 0 22px;
    padding-left: 7px;
    font-size: 15px;
    background-color: #efefef;
}
.task-search .caret {
    margin: 0 7px 0 3px;
}
.task-search input {
    flex: 1;
    min-width: 0;
    color: #111;
}
.task-search button {
    width: 70px;
    height: 43px;
    color: #fff;
    background-color: #2289ff;
}
.grip {
    width: 5px;
    height: 36px;
    margin: 0 24px 0 11px;
    border: 1px solid #56606c;
    border-width: 0 1px;
}
.apps {
    display: flex;
    gap: 14px;
    align-self: stretch;
}
.app {
    display: grid;
    place-items: center;
    width: 61px;
}
.app.open {
    border-top: 3px solid transparent;
    border-bottom: 3px solid #76b5ea;
}
.app.active {
    width: 73px;
    margin-left: -6px;
    border-top-color: #535e69;
    background-color: #535e69;
}
.weather {
    display: flex;
    align-items: center;
    gap: 10px;
    margin-left: auto;
}
.weather-text {
    position: relative;
    width: 102px;
    height: 60px;
    font: 18px/24px "Noto Sans", "Noto Sans CJK SC", sans-serif;
    white-space: nowrap;
}
.temp {
    position: absolute;
    left: 0;
    top: 18px;
    font-size: 20px;
}
.memory {
    position: absolute;
    left: 4px;
    top: 5px;
    text-align: center;
}
.tray {
    display: flex;
    align-items: center;
    gap: 12px;
    margin: 0 19px 0 22px;
}
.tray > svg {
    width: 24px;
    height: 24px;
}
.ime {
    width: 24px;
    text-align: center;
}
.clock {
    width: 94px;
    margin: 0 29px 0 24px;
    text-align: center;
    font-family: "Noto Sans", "Noto Sans CJK SC", sans-serif;
    white-space: nowrap;
}
.notice {
    position: relative;
    width: 36px;
    height: 34px;
    margin-right: 8px;
}
.notice b {
    position: absolute;
    right: 0;
    bottom: 0;
    width: 20px;
    height: 20px;
    font: 12px/20px "Noto Sans", sans-serif;
    text-align: center;
    background-color: #d80000;
}
.desktop-edge {
    width: 7px;
    height: 60px;
    border-left: 1px solid #777;
}

/* floating overlays */
.battery {
    position: absolute;
    left: 2px;
    top: 8px;
    width: 13px;
    height: 87px;
    border: 1px solid #8da5c8;
    border-radius: 5px;
    background: repeating-linear-gradient(to bottom, transparent 0 3px, rgba(120,230,130,0.7) 3px 4px) bottom / 100% 18px no-repeat, linear-gradient(to bottom, #233865 42%, #666 42% 80%, #3f7a48 80%);
}
.netmeter {
    position: absolute;
    right: 1px;
    top: 173px;
    z-index: 2;
    display: flex;
    align-items: center;
    font-family: "Noto Sans", sans-serif;
}
.speeds {
    width: 130px;
    height: 63px;
    margin-right: -42px;
    padding: 0 48px 0 16px;
    border-radius: 31px 0 0 31px;
    color: #9a9da6;
    background-color: #343743;
    box-shadow: 0 2px 6px #8e9199;
    font-size: 15px;
}
.speeds div {
    display: flex;
    align-items: center;
    justify-content: space-between;
    height: 32px;
}
.speeds b {
    color: #fff;
    font-size: 16px;
}
.dial {
    position: relative;
    border-radius: 50%;
    background-color: #4e5260;
    box-shadow: 0 0 4px #555966;
}
.percent {
    position: absolute;
    inset: 0;
    display: flex;
    align-items: baseline;
    justify-content: center;
    font-size: 38px;
    font-weight: 300;
    line-height: 88px;
    color: #e4e5e8;
}
.percent small {
    font-size: 16px;
}
.pointer {
    position: absolute;
    left: 1844px;
    top: 619px;
    z-index: 3;
}
```
